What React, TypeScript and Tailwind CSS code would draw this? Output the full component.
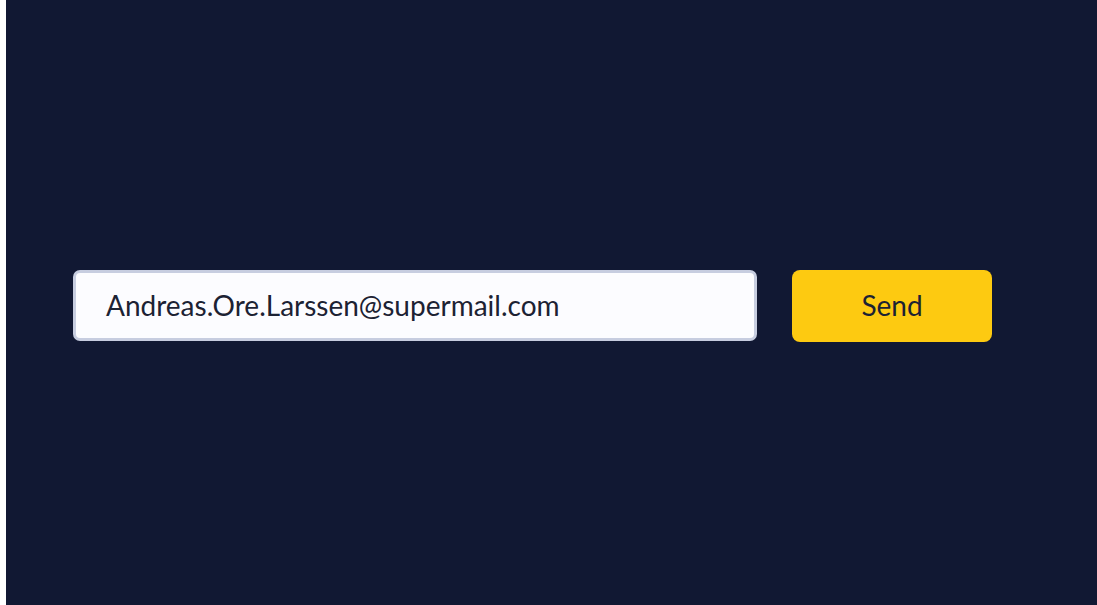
import React from "react";

export default function App() {
  return (
    <div className="flex h-[605px] w-[1097px] bg-white" style={{ fontFamily: "Lato, 'Noto Sans', sans-serif" }}>
      <div className="ml-[6px] flex-1 bg-[#111833] pl-[67px] pt-[270px]">
        <div className="flex items-start gap-[35px]">
          <div className="flex h-[71px] w-[684px] items-center rounded-[7px] border-[3px] border-[#c7cde0] bg-[#fcfcff] pb-[2px] pl-[30px]">
            <span className="text-[28px] text-[#1c2233]">Andreas.Ore.Larssen@supermail.com</span>
          </div>
          <button className="flex h-[72px] w-[200px] items-center justify-center rounded-[8px] bg-[#fdca11] pb-[2px] text-[28px] text-[#1c2233]">
            Send
          </button>
        </div>
      </div>
    </div>
  );
}
